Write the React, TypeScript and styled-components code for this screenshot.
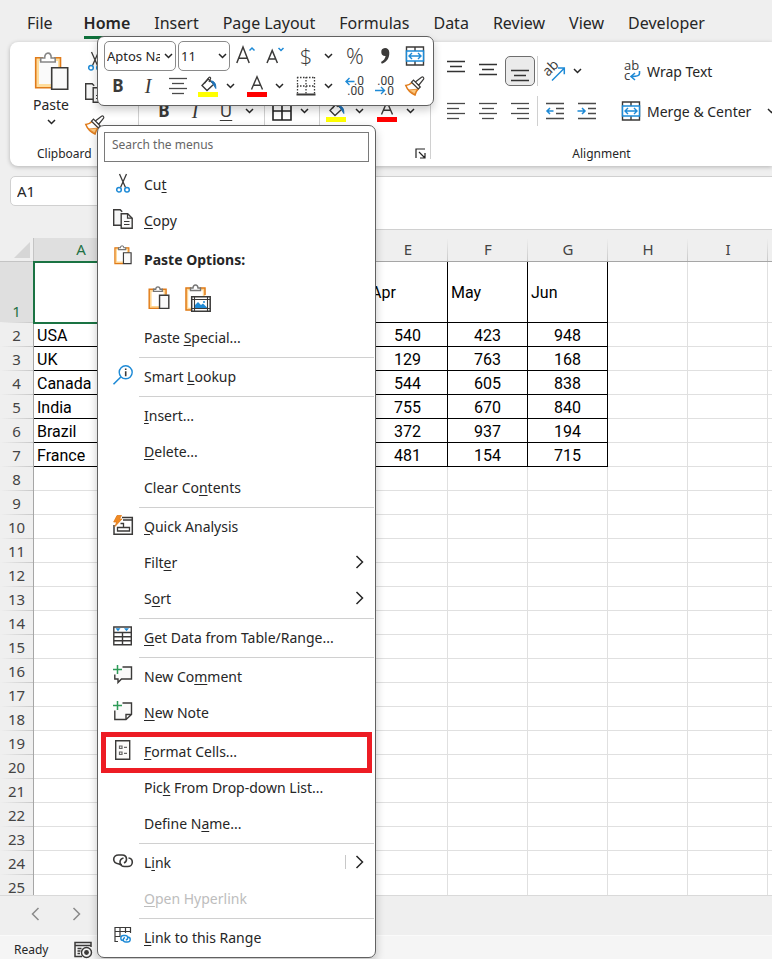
import React from "react";
import styled, { createGlobalStyle, css } from "styled-components";

const UI = `"Noto Sans", "Open Sans", sans-serif`;
const CELL = `Roboto, "Liberation Sans", sans-serif`;
const INK = "#3b3a39";
const BLUE = "#1e8ad6";
const ORANGE = "#e07b1a";

const Global = createGlobalStyle`
  *, *::before, *::after { box-sizing: border-box; }
  body { margin: 0; background: #efefef; font-family: ${UI}; color: #262626; }
  button, input, select, textarea { font: inherit; color: inherit; }
`;

/* ---------- icons ---------- */

const Drawing = styled.svg`
  flex-shrink: 0;
  overflow: visible;
`;
type SvgProps = { w?: number; h?: number; box?: string; children: React.ReactNode };
const Svg = ({ w = 20, h = 20, box, children }: SvgProps) => (
  <Drawing width={w} height={h} viewBox={box ?? `0 0 ${w} ${h}`} fill="none" stroke={INK} strokeWidth="1.4" aria-hidden="true">
    {children}
  </Drawing>
);

const Chevron = () => (
  <Svg w={9} h={6}><path d="M1 1l3.5 3.5L8 1" stroke="#262626" strokeWidth="1.5" /></Svg>
);
const ChevronRight = ({ color = "#262626" }: { color?: string }) => (
  <Svg w={9} h={14}><path d="M1.500 1l6 6-6 6" stroke={color} strokeWidth="1.5" /></Svg>
);
const ChevronLeft = ({ color = "#262626" }: { color?: string }) => (
  <Svg w={9} h={14}><path d="M7.500 1l-6 6 6 6" stroke={color} strokeWidth="1.5" /></Svg>
);
const Scissors = () => (
  <Svg>
    <path d="M6.500 1l6 13.500M13.500 1l-6 13.500" strokeWidth="1.3" />
    <circle cx="6" cy="16.700" r="2.300" stroke={BLUE} strokeWidth="1.5" />
    <circle cx="14" cy="16.700" r="2.300" stroke={BLUE} strokeWidth="1.5" />
  </Svg>
);
const CopyPages = () => (
  <Svg>
    <path d="M8 16.300H0.700V0.700h6.500l2 2" fill="#f6f6f6" />
    <path d="M8.200 4.700h6.500l4.500 4.500v10H8.200z" fill="#fafafa" />
    <path d="M14.500 4.700v4.500h4.700M11 12.500h5.500M11 15.500h5.500" strokeWidth="1.200" />
  </Svg>
);
const Clipboard = ({ w = 20, h = 22 }: { w?: number; h?: number }) => (
  <Svg w={w} h={h} box="0 0 20 22">
    <path d="M2 4h13.500v15.500H2z" fill="#fff" stroke="#ffd591" strokeWidth="2.400" />
    <path d="M6 3H1v17.500h9M12.500 3h4v5" stroke={ORANGE} strokeWidth="1.3" />
    <path d="M5 5V3h2c.2-3 3.800-3 4 0h2v2z" fill="#fff" stroke="#767676" strokeWidth="1.200" />
    <path d="M10.500 8.500h8.500v12h-8.500z" fill="#fafafa" strokeWidth="1.3" />
  </Svg>
);
const PasteLarge = () => (
  <Svg w={35} h={39}>
    <path d="M3.500 7.500h22v26h-22z" fill="#fafafa" stroke="#ffdd9c" strokeWidth="3" />
    <path d="M9 5.700H1.700v30H17M20 5.700h6.500V15" stroke={ORANGE} strokeWidth="1.600" />
    <path d="M6.700 10V6h4c0-6.500 6.500-6.500 6.500 0h4v4z" fill="#fff" stroke="#868686" strokeWidth="1.600" />
    <path d="M17.700 15.700h16v21.500h-16z" fill="#fafafa" strokeWidth="1.600" />
  </Svg>
);
const PastePicture = () => (
  <Svg w={26} h={28}>
    <path d="M2 5h17v20H2z" fill="#fff" stroke="#ffd591" strokeWidth="2.400" />
    <path d="M6 4H1v22h5M15 4h5v7" stroke={ORANGE} strokeWidth="1.5" />
    <path d="M5.500 6.500V4H8c.3-4 4.700-4 5 0h2.500v2.500z" fill="#fff" stroke="#767676" />
    <path d="M6.700 12.700h18.500v14.500H6.700z" fill="#fff" strokeWidth="1.5" />
    <path d="M9.500 12.700v14.500M22.500 12.700v14.500M6.700 15.500h18.500M6.700 24.500h18.500" strokeWidth="1.100" />
    <path d="M10 24v-3l3-3 3 3 2-1.500 4 4V24z" fill={BLUE} stroke="none" />
    <circle cx="19" cy="18" r="1" fill={BLUE} stroke="none" />
  </Svg>
);
const Brush = () => (
  <Svg>
    <path d="M7 6.500C5 8.500 3 9.500.8 9.500 2.500 14 5.500 17 10 19c.5-2.500 2-4.800 3.500-6.300z" fill="#fff" stroke={ORANGE} strokeWidth="1.500" />
    <path d="M3.500 14l8.500-.8L9.700 18z" fill="#fbc87e" stroke={ORANGE} strokeWidth=".8" />
    <path d="M10 6.200L16.500 1.200c1.500-.8 2.800.6 2.100 2L13.500 9.500z" fill="#fff" strokeWidth="1.200" />
    <path d="M6.500 6.200l2-2 6.800 6.800-2 2z" fill="#fff" strokeWidth="1.200" />
  </Svg>
);
const lineRuns: Record<string, number[][]> = {
  left: [[1, 19], [1, 13], [1, 19], [1, 13]],
  center: [[1, 19], [4, 16], [1, 19], [4, 16]],
  right: [[1, 19], [7, 19], [1, 19], [7, 19]],
};
const Lines = ({ kind }: { kind: string }) => (
  <Svg>
    {lineRuns[kind].map(([a, b], i) => (
      <path key={i} d={`M${a} ${2.5 + i * 5}H${b}`} stroke="#4a4a4a" strokeWidth="1.3" />
    ))}
  </Svg>
);
const VLines = ({ top }: { top: number }) => (
  <Svg h={28}>
    <path d={`M1 ${top + 0.5}h18M4 ${top + 5.5}h12M1 ${top + 10.5}h18`} stroke="#333" strokeWidth="1.3" />
  </Svg>
);
const Indent = ({ out }: { out?: boolean }) => (
  <Svg>
    <path d="M1 2.500h18M11 7.500h8M11 12.500h8M1 17.500h18" stroke="#4a4a4a" strokeWidth="1.300" />
    <path d={out ? "M8.500 10H1.500M5 7l-3 3 3 3" : "M.5 10h7M5 7l3 3-3 3"} stroke={BLUE} strokeWidth="1.5" />
  </Svg>
);
const Merge = () => (
  <Svg>
    <path d="M1.500 1h17v18h-17zM10 1v4M10 15v4" strokeWidth="1.400" />
    <path d="M1.500 5h17v10h-17z" fill="#fff" stroke={BLUE} strokeWidth="1.500" />
    <path d="M4 10h12M7 7l-3 3 3 3M13 7l3 3-3 3" stroke={BLUE} strokeWidth="1.400" />
  </Svg>
);
const Fill = () => (
  <Svg h={21}>
    <path d="M10 3l6 5-7 6.500L4 9.500z" fill="#fff" strokeWidth="1.400" />
    <path d="M6.500 7.500L11 1.500c1-.8 2 .2 1.500 1.200L11 6" strokeWidth="1.200" />
    <path d="M13 5c3 0 5 2 4.800 7.500l-2-3.500z" fill="#1f72b8" stroke="#1f72b8" strokeWidth="1" />
    <path d="M0 16h20v5H0z" fill="#ffff00" stroke="none" />
  </Svg>
);
const FontColor = () => (
  <Svg h={21}>
    <path d="M4.500 13.500L10 .8l5.500 12.700M6.500 9.300h7" strokeWidth="1.400" />
    <path d="M0 16h20v5H0z" fill="#ff0000" stroke="none" />
  </Svg>
);
const DottedBorders = () => (
  <Svg>
    <path d="M1 1.500h18M1 10h18M1.500 1v17M10 1v17M18.500 1v17" strokeDasharray="1.500 1.500" strokeWidth="1.300" />
    <path d="M.5 18.500h19" strokeWidth="2" />
  </Svg>
);
const AllBorders = () => (
  <Svg><path d="M1 1h18v18H1zM10 1v18M1 10h18" stroke="#222" strokeWidth="1.600" /></Svg>
);
const GrowFont = ({ down }: { down?: boolean }) => (
  <Svg>
    <path d={down ? "M1 17L6.200 4.500 11.400 17M2.800 13h6.800" : "M.8 17L7 1l6.200 16M3 12.200h8"} strokeWidth="1.500" />
    <path d={down ? "M12.500 2l2.500 2.500L17.500 2" : "M13.500 4.500L16 2l2.500 2.500"} stroke={BLUE} strokeWidth="1.500" />
  </Svg>
);
const Comma = () => (
  <Svg><path d="M10 2a4 4 0 1 0 .6 8c-.4 2.600-2 4.500-4.600 6l.8 1.700C12 16 14.500 12 14.300 6.500 14.200 3.500 12.500 2 10 2z" fill={INK} stroke="none" /></Svg>
);
const Orientation = () => (
  <Svg>
    <g transform="rotate(-45 5 11)" fill={INK} stroke="none"><text x="0" y="13" fontSize="14" fontFamily="Open Sans">ab</text></g>
    <path d="M7 19.500L19 7.500M13 7h6.300v6.300" stroke={BLUE} strokeWidth="1.500" />
  </Svg>
);
const Wrap = () => (
  <Svg>
    <g fill={INK} stroke="none" fontSize="13" fontFamily="Open Sans"><text x="3" y="9">ab</text><text x="3" y="19">c</text></g>
    <path d="M18.500 10v2.500c0 2-2 3-7.500 3M14 12l-4 3.500 4 3.500" stroke={BLUE} strokeWidth="1.600" />
  </Svg>
);
const Decimals = ({ less }: { less?: boolean }) => (
  <Svg>
    <g fill={INK} stroke="none" fontSize="12" fontFamily="Roboto" textAnchor="end">
      <text x="19" y="9">{less ? ".00" : ".0"}</text>
      <text x="19" y="19">{less ? ".0" : ".00"}</text>
    </g>
    <path d={less ? "M0 14.500h9.500M6 11l3.500 3.500L6 18" : "M9.500 5.500H1M4.500 2L1 5.500 4.500 9"} stroke={BLUE} strokeWidth="1.400" />
  </Svg>
);
const Lookup = () => (
  <Svg>
    <path d="M7.800 12L.5 19.300" stroke={BLUE} strokeWidth="1.600" />
    <circle cx="12.700" cy="7.300" r="6.500" stroke={BLUE} strokeWidth="1.400" />
    <path d="M12.700 6.200v5M12.700 3.500v1.600" strokeWidth="1.600" />
  </Svg>
);
const QuickAnalysis = () => (
  <Svg>
    <path d="M9 2.500h10.300v16.800H1V10M10 5h9" strokeWidth="1.500" />
    <path d="M4.500 12.500h12v3.500h-12zM10.500 12.500V8.500h-3" strokeWidth="1.300" />
    <path d="M4 .5h4.500L6.500 4H9L2 11.500 3.700 7H.7z" fill="#f08a24" stroke={ORANGE} strokeWidth=".8" />
  </Svg>
);
const DataTable = () => (
  <Svg>
    <path d="M.8 1h17.500v17.800H.8zM.8 6.500h17.500M.8 10.700h17.500M.8 14.700h17.500M9.500 6v13" strokeWidth="1.400" />
    <path d="M2.500 2.200h5L5 5.200zM11 2.200h5l-2.500 3z" fill={BLUE} stroke="none" />
  </Svg>
);
const GREEN = "#2e9b57";
const NewComment = () => (
  <Svg>
    <path d="M9.500 2h9v12H8.500L5 17.500V14H1.800V9.500" fill="#fafafa" />
    <path d="M4.500 0v9M0 4.500h9" stroke={GREEN} strokeWidth="1.500" />
  </Svg>
);
const NewNote = () => (
  <Svg>
    <path d="M9.500 2h9v11.500L13 18.500H1.800V9.500M18.500 13.500H13v5" fill="#fafafa" />
    <path d="M4.500 0v9M0 4.500h9" stroke={GREEN} strokeWidth="1.500" />
  </Svg>
);
const FormatCells = () => (
  <Svg>
    <path d="M2.700.8h14v18.400h-14z" fill="#fafafa" />
    <path d="M6.500 6h2.500v2.500H6.500zM6.500 12h2.500v2.500H6.500zM11 7.300h3M11 13.300h3" strokeWidth="1.200" stroke="#666" />
  </Svg>
);
const LinkIcon = () => (
  <Svg>
    <path d="M9 13.500a4.600 4.600 0 0 1-3-.5C2 12.500.7 10.500.7 8.300.7 5.500 3 4 5.500 4H9c2.600 0 4.500 1.700 4.500 4.300 0 1.700-1 3-2.500 3.700" strokeWidth="1.600" />
    <path d="M10.500 7c-1.800.5-3.500 2-3.500 4.200 0 2.600 2 4.300 4.500 4.300h3.200c2.500 0 4.600-1.700 4.600-4.300 0-2.300-1.500-4-3.800-4.200" strokeWidth="1.600" />
  </Svg>
);
const LinkRange = () => (
  <Svg>
    <path d="M5 15.500H2V1.500h15.500V7M2 5.500h15.500M2 10.500h5M7 1.500v9.500M12.500 1.500V7" strokeWidth="1.200" />
    <path d="M10 14.500c-3-.2-3-5 .5-5h1.800c3 0 3.200 4 .5 4.500M12 11.500c-2.500.7-2.300 4.500.7 4.500h1.800c3.500 0 3.500-4.500.7-5" stroke={BLUE} strokeWidth="1.400" />
  </Svg>
);
const MacroIcon = () => (
  <Svg w={19} h={18}>
    <path d="M8 15.500H1V1.500h16V6M1 4.500h16M3.500 7.500h4M3.500 10h3M3.500 12.500h2.500" strokeWidth="1.500" />
    <circle cx="12.500" cy="11.500" r="5" fill="#f5f5f5" />
    <circle cx="12.500" cy="11.500" r="2.400" fill={INK} stroke="none" />
  </Svg>
);
const Launcher = () => (
  <Svg w={11} h={11}><path d="M1 10V1h9M4 4l5.500 5.500M10 5v5H5" stroke="#222" strokeWidth="1.200" /></Svg>
);

/* ---------- shell ---------- */

const Window = styled.div`
  position: relative;
  display: flex;
  flex-direction: column;
  height: 100vh;
  overflow: hidden;
`;
const TabStrip = styled.nav`
  display: flex;
  flex-shrink: 0;
  gap: 24px;
  height: 42px;
  padding: 9px 27px 0;
  white-space: nowrap;
`;
const Tab = styled.button<{ $active?: boolean }>`
  height: 30px;
  padding: 0;
  border: 0;
  border-bottom: 3px solid ${(p) => (p.$active ? "#0f703b" : "transparent")};
  background: none;
  font-size: 16px;
  font-weight: ${(p) => (p.$active ? 600 : 400)};
`;
const FileTab = styled(Tab)`
  margin-right: 7px;
`;

/* ---------- ribbon ---------- */

const Ribbon = styled.section`
  display: flex;
  flex-shrink: 0;
  height: 124px;
  margin-left: 10px;
  padding: 4px 0 7px;
  background: #fff;
  border-radius: 8px 0 0 8px;
  box-shadow: 0 1px 4px rgba(0, 0, 0, 0.25);
`;
const Group = styled.div<{ $width?: number }>`
  display: flex;
  flex-direction: column;
  justify-content: space-between;
  flex: ${(p) => (p.$width ? `0 0 ${p.$width}px` : "1 1 0")};
  min-width: 0;
  padding: ${(p) => (p.$width ? "0 4px 0 9px" : "0 10px")};
  & + & { border-left: 1px solid #d0d0d0; }
`;
const GroupLabel = styled.div`
  display: flex;
  justify-content: center;
  align-items: center;
  height: 12px;
  font-size: 12px;
`;
const FontLabel = styled(GroupLabel)`
  justify-content: flex-end;
`;
const ClipboardLabel = styled(GroupLabel)`
  justify-content: space-between;
  padding-left: 18px;
`;
const Row = styled.div<{ $gap?: number }>`
  display: flex;
  align-items: center;
  gap: ${(p) => p.$gap ?? 0}px;
`;
const ClipboardBody = styled.div`
  display: flex;
  gap: 5px;
  padding-left: 4px;
`;
const PasteButton = styled.button`
  display: flex;
  flex-direction: column;
  align-items: center;
  gap: 4px;
  width: 56px;
  padding: 6px 0 0;
  border: 0;
  background: none;
  font-size: 14px;
  line-height: 20px;
`;
const SmallStack = styled.div`
  display: flex;
  flex-direction: column;
  gap: 2px;
`;
const IconButton = styled.button<{ $w?: number; $on?: boolean }>`
  display: flex;
  flex-shrink: 0;
  align-items: center;
  justify-content: center;
  width: ${(p) => p.$w ?? 30}px;
  height: 30px;
  padding: 0;
  border: 1px solid ${(p) => (p.$on ? "#6e6e6e" : "transparent")};
  border-radius: 5px;
  background: ${(p) => (p.$on ? "#ebebeb" : "none")};
`;
const StackButton = styled(IconButton)`
  width: 22px;
`;
const DropButton = styled(IconButton)`
  width: 19px;
  padding-right: 4px;
`;
const Glyph = styled.span<{ $kind?: "bold" | "italic" | "underline" }>`
  font-size: 17px;
  line-height: 20px;
  color: ${INK};
  ${(p) => p.$kind === "bold" && css`font-weight: 700;`}
  ${(p) => p.$kind === "italic" && css`font-family: "Liberation Serif", serif; font-style: italic; font-size: 20px;`}
  ${(p) => p.$kind === "underline" && css`text-decoration: underline; text-underline-offset: 3px;`}
`;
const Symbol = styled.span`
  padding-bottom: 2px;
  font-family: "Open Sans", sans-serif;
  font-size: 22px;
  font-weight: 300;
  line-height: 24px;
  color: ${INK};
`;
const VRule = styled.span`
  align-self: stretch;
  width: 1px;
  background: #d0d0d0;
`;
const FontBody = styled.div`
  display: flex;
  flex-direction: column;
  justify-content: flex-end;
  height: 80px;
`;
const FontRow = styled.div`
  display: grid;
  grid-template-columns: 32px 30px 32px 18px 8px 27px 22px 4px 30px 20px 32px 18px;
  align-items: center;
  justify-items: center;
`;
const AlignBody = styled.div`
  display: flex;
  gap: 7px;
  padding-top: 8px;
`;
const AlignRows = styled.div`
  display: flex;
  flex-direction: column;
  gap: 10px;
  padding: 2px 0;
`;
const TallRule = styled.span`
  width: 1px;
  height: 79px;
  background: #c8c8c8;
`;
const LabelButton = styled.button`
  display: flex;
  align-items: center;
  gap: 6px;
  height: 30px;
  padding: 0 0 0 5px;
  border: 0;
  background: none;
  font-size: 14px;
  white-space: nowrap;
`;
const MergeDrop = styled.span`
  display: flex;
  padding-left: 10px;
`;

/* ---------- formula bar ---------- */

const FormulaRow = styled.div`
  display: flex;
  flex-shrink: 0;
  align-items: flex-start;
  gap: 90px;
  height: 64px;
  padding: 10px 0 0 10px;
`;
const NameBox = styled.input`
  width: 110px;
  height: 30px;
  padding: 0 6px;
  border: 1px solid #d0d0d0;
  border-radius: 5px;
  background: #fff;
  font-size: 15px;
`;
const FormulaInput = styled.textarea`
  flex: 1;
  height: 54px;
  border: 1px solid #d0d0d0;
  border-right: 0;
  border-radius: 5px 0 0 5px;
  background: #fff;
  resize: none;
`;

/* ---------- sheet ---------- */

const SheetArea = styled.main`
  flex: 1;
  min-height: 0;
  padding-top: 8px;
  overflow: hidden;
`;
const Sheet = styled.table`
  width: 1648px;
  table-layout: fixed;
  border-collapse: separate;
  border-spacing: 0;
  background: #fff;
  font-family: ${CELL};
  font-size: 16px;
  color: #000;
`;
const Col = styled.col<{ $w: number }>`
  width: ${(p) => p.$w}px;
`;
const ColHead = styled.th<{ $on?: boolean }>`
  height: 24px;
  padding: 0 0 2px;
  border-bottom: 1px solid #a6a6a6;
  background: linear-gradient(#efefef, #c8c8c8) right / 1px 100% no-repeat, ${(p) => (p.$on ? "#dfdfdf" : "#efefef")};
  font: 400 15px/20px ${UI};
  color: ${(p) => (p.$on ? "#1f7145" : "#444")};
`;
const Corner = styled.td`
  height: 24px;
  padding: 0 3px 3px 0;
  border-right: 1px solid #c4c4c4;
  border-bottom: 1px solid #c4c4c4;
  background: #efefef;
  vertical-align: bottom;
  text-align: right;
  line-height: 0;
`;
const RowHead = styled.th<{ $on?: boolean }>`
  height: ${(p) => (p.$on ? 61 : 24)}px;
  padding: 0 0 2px;
  border-right: 1px solid #a6a6a6;
  background: linear-gradient(90deg, #efefef, #c8c8c8) bottom / 100% 1px no-repeat, ${(p) => (p.$on ? "#dfdfdf" : "#efefef")};
  font: 400 15px/20px ${UI};
  color: ${(p) => (p.$on ? "#1f7145" : "#444")};
  vertical-align: bottom;
`;
const Cell = styled.td<{ $data?: boolean; $center?: boolean; $selected?: boolean }>`
  padding: 2px 3px 0;
  border-right: 1px solid ${(p) => (p.$data ? "#000" : "#e0e0e0")};
  border-bottom: 1px solid ${(p) => (p.$data ? "#000" : "#e0e0e0")};
  line-height: 20px;
  text-align: ${(p) => (p.$center ? "center" : "left")};
  ${(p) => p.$selected && css`
    position: relative;
    outline: 2px solid #1a7343;
    outline-offset: -1px;
  `}
`;
const SheetBar = styled.div`
  display: flex;
  flex-shrink: 0;
  align-items: center;
  gap: 20px;
  height: 40px;
  padding: 0 25px 4px;
  border-top: 1px solid #d9d9d9;
`;
const NavButton = styled.button`
  display: flex;
  justify-content: center;
  width: 21px;
  padding: 0;
  border: 0;
  background: none;
`;
const StatusBar = styled.footer`
  display: flex;
  flex-shrink: 0;
  align-items: center;
  gap: 26px;
  height: 24px;
  padding: 4px 14px 0;
  border-top: 1px solid #fafafa;
  background: #f5f5f5;
  font-size: 12px;
`;

/* ---------- floating toolbar and menu ---------- */

const floating = css`
  position: absolute;
  left: 97px;
  border: 1px solid #616161;
  background: #fff;
`;
const MiniBar = styled.div`
  ${floating}
  top: 36px;
  padding: 4px 3px 4px 5px;
  border-radius: 7px;
  box-shadow: 0 4px 8px rgba(0, 0, 0, 0.2);
`;
const SelectBox = styled.label<{ $w: number }>`
  display: grid;
  align-items: center;
  width: ${(p) => p.$w}px;
  height: 30px;
  margin: 0 1px;
  border: 1px solid #8a8a8a;
  border-radius: 5px;
  overflow: hidden;
  & > * { grid-area: 1 / 1; }
  & > svg { justify-self: end; margin-right: 2px; pointer-events: none; }
`;
const Select = styled.select`
  appearance: none;
  min-width: 0;
  margin-right: 15px;
  padding: 0 0 0 2px;
  border: 0;
  background: none;
  font-size: 13px;
  outline: none;
  text-overflow: clip;
`;
const Menu = styled.div`
  ${floating}
  top: 125px;
  width: 279px;
  padding: 6px 0 1px;
  border-radius: 7px;
  box-shadow: 0 4px 10px rgba(0, 0, 0, 0.22);
`;
const Search = styled.input`
  display: block;
  width: 265px;
  height: 30px;
  margin: 0 6px 5px;
  padding: 0 7px 6px;
  border: 1px solid #7a7a7a;
  background: #fff;
  font-size: 12px;
  &::placeholder { color: #666; opacity: 1; }
`;
const Item = styled.button<{ $dim?: boolean; $strong?: boolean; $marked?: boolean }>`
  position: relative;
  display: grid;
  grid-template-columns: 20px 1fr auto;
  column-gap: 11px;
  align-items: center;
  width: 100%;
  height: 36px;
  padding: 0 11px 2px 15px;
  border: 0;
  background: none;
  font-size: 14px;
  font-weight: ${(p) => (p.$strong ? 700 : 400)};
  text-align: left;
  color: ${(p) => (p.$dim ? "#bdbdbd" : "#262626")};
  u { text-underline-offset: 2px; }
  ${(p) => p.$marked && css`
    &::after {
      content: "";
      position: absolute;
      inset: -2px 3px -3px 3px;
      border: 5px solid #ed1c24;
    }
  `}
`;
const ItemIcon = styled.span<{ $raised?: boolean }>`
  display: flex;
  justify-content: center;
  padding-bottom: ${(p) => (p.$raised ? 8 : 2)}px;
`;
const Arrow = styled.span<{ $split?: boolean }>`
  display: flex;
  padding-left: 9px;
  border-left: 1px solid ${(p) => (p.$split ? "#c8c8c8" : "transparent")};
`;
const Divider = styled.hr<{ $blank?: boolean }>`
  height: 1px;
  margin: 1px 1px 1px 41px;
  border: 0;
  background: ${(p) => (p.$blank ? "transparent" : "#d0d0d0")};
`;
const PasteChoices = styled.div`
  display: flex;
  align-items: center;
  gap: 15px;
  height: 42px;
  padding: 0 0 2px 50px;
`;
const ChoiceButton = styled.button`
  display: flex;
  padding: 0;
  border: 0;
  background: none;
`;

/* ---------- data ---------- */

const columns = "ABCDEFGHIJKLMNOPQRST".split("");
const data: Record<number, Record<string, string>> = {
  1: { B: "Jan", C: "Feb", D: "Mar", E: "Apr", F: "May", G: "Jun" },
  2: { A: "USA", E: "540", F: "423", G: "948" },
  3: { A: "UK", E: "129", F: "763", G: "168" },
  4: { A: "Canada", E: "544", F: "605", G: "838" },
  5: { A: "India", E: "755", F: "670", G: "840" },
  6: { A: "Brazil", E: "372", F: "937", G: "194" },
  7: { A: "France", E: "481", F: "154", G: "715" },
};

type Entry =
  | { sep: true; blank?: boolean }
  | { choices: true }
  | { label: string; icon?: React.ReactNode; arrow?: boolean; split?: boolean; dim?: boolean; strong?: boolean; marked?: boolean };

/* An underscore stands before the access key of a label. */
const entries: Entry[] = [
  { label: "Cu_t", icon: <Scissors /> },
  { label: "_Copy", icon: <CopyPages /> },
  { sep: true, blank: true },
  { label: "Paste Options:", icon: <Clipboard w={18} h={20} />, strong: true },
  { choices: true },
  { label: "Paste _Special..." },
  { sep: true },
  { label: "Smart _Lookup", icon: <Lookup /> },
  { sep: true },
  { label: "_Insert..." },
  { label: "_Delete..." },
  { label: "Clear Co_ntents" },
  { sep: true },
  { label: "_Quick Analysis", icon: <QuickAnalysis /> },
  { label: "Filt_er", arrow: true },
  { label: "S_ort", arrow: true },
  { sep: true },
  { label: "_Get Data from Table/Range...", icon: <DataTable /> },
  { sep: true },
  { label: "New Co_mment", icon: <NewComment /> },
  { label: "_New Note", icon: <NewNote /> },
  { sep: true, blank: true },
  { label: "_Format Cells...", icon: <FormatCells />, marked: true },
  { label: "Pic_k From Drop-down List..." },
  { label: "Define N_ame..." },
  { sep: true },
  { label: "L_ink", icon: <LinkIcon />, arrow: true, split: true },
  { label: "_Open Hyperlink", dim: true },
  { sep: true },
  { label: "_Link to this Range", icon: <LinkRange /> },
];

const KeyLabel = ({ text }: { text: string }) => {
  const i = text.indexOf("_");
  if (i < 0) return <span>{text}</span>;
  return <span>{text.slice(0, i)}<u>{text[i + 1]}</u>{text.slice(i + 2)}</span>;
};

const ContextMenu = () => (
  <Menu role="menu">
    <Search aria-label="Search the menus" placeholder="Search the menus" />
    {entries.map((e, i) => {
      if ("sep" in e) return <Divider key={i} $blank={e.blank} />;
      if ("choices" in e)
        return (
          <PasteChoices key={i}>
            <ChoiceButton aria-label="Paste"><Clipboard w={22} h={24} /></ChoiceButton>
            <ChoiceButton aria-label="Paste picture"><PastePicture /></ChoiceButton>
          </PasteChoices>
        );
      return (
        <Item key={i} role="menuitem" disabled={e.dim} $dim={e.dim} $strong={e.strong} $marked={e.marked}>
          <ItemIcon $raised={e.strong}>{e.icon}</ItemIcon>
          <KeyLabel text={e.label} />
          {e.arrow && <Arrow $split={e.split}><ChevronRight /></Arrow>}
        </Item>
      );
    })}
  </Menu>
);

const Drop = ({ label }: { label: string }) => (
  <DropButton aria-label={label}><Chevron /></DropButton>
);

const MiniToolbar = () => (
  <MiniBar role="toolbar">
    <Row>
      <SelectBox $w={72}>
        <Select aria-label="Font"><option>Aptos Narrow</option></Select>
        <Chevron />
      </SelectBox>
      <SelectBox $w={52}>
        <Select aria-label="Font size"><option>11</option></Select>
        <Chevron />
      </SelectBox>
      <IconButton aria-label="Increase font size"><GrowFont /></IconButton>
      <IconButton aria-label="Decrease font size"><GrowFont down /></IconButton>
      <IconButton aria-label="Accounting format"><Symbol>$</Symbol></IconButton>
      <Drop label="Accounting options" />
      <IconButton aria-label="Percent"><Symbol>%</Symbol></IconButton>
      <IconButton aria-label="Comma style"><Comma /></IconButton>
      <IconButton aria-label="Merge and center"><Merge /></IconButton>
    </Row>
    <Row>
      <IconButton aria-label="Bold"><Glyph $kind="bold">B</Glyph></IconButton>
      <IconButton aria-label="Italic"><Glyph $kind="italic">I</Glyph></IconButton>
      <IconButton aria-label="Center"><Lines kind="center" /></IconButton>
      <IconButton aria-label="Fill color"><Fill /></IconButton>
      <Drop label="Fill options" />
      <IconButton aria-label="Font color"><FontColor /></IconButton>
      <Drop label="Font color options" />
      <IconButton aria-label="Borders"><DottedBorders /></IconButton>
      <Drop label="Border options" />
      <IconButton aria-label="Increase decimal"><Decimals /></IconButton>
      <IconButton aria-label="Decrease decimal"><Decimals less /></IconButton>
      <IconButton aria-label="Format painter"><Brush /></IconButton>
    </Row>
  </MiniBar>
);

const RibbonBar = () => (
  <Ribbon>
    <Group $width={128}>
      <ClipboardBody>
        <PasteButton><PasteLarge />Paste<Chevron /></PasteButton>
        <SmallStack>
          <StackButton aria-label="Cut"><Scissors /></StackButton>
          <StackButton aria-label="Copy"><CopyPages /></StackButton>
          <StackButton aria-label="Format painter"><Brush /></StackButton>
        </SmallStack>
      </ClipboardBody>
      <ClipboardLabel>Clipboard<Launcher /></ClipboardLabel>
    </Group>
    <Group $width={292}>
      <FontBody>
        <FontRow>
          <IconButton aria-label="Bold"><Glyph $kind="bold">B</Glyph></IconButton>
          <IconButton aria-label="Italic"><Glyph $kind="italic">I</Glyph></IconButton>
          <IconButton aria-label="Underline"><Glyph $kind="underline">U</Glyph></IconButton>
          <Drop label="Underline options" />
          <VRule />
          <IconButton aria-label="Borders"><AllBorders /></IconButton>
          <Drop label="Border options" />
          <VRule />
          <IconButton aria-label="Fill color"><Fill /></IconButton>
          <Drop label="Fill options" />
          <IconButton aria-label="Font color"><FontColor /></IconButton>
          <Drop label="Font color options" />
        </FontRow>
      </FontBody>
      <FontLabel><Launcher /></FontLabel>
    </Group>
    <Group>
      <AlignBody>
        <AlignRows>
          <Row $gap={2}>
            <IconButton aria-label="Top align"><VLines top={4} /></IconButton>
            <IconButton aria-label="Middle align"><VLines top={7} /></IconButton>
            <IconButton aria-label="Bottom align" $on><VLines top={13} /></IconButton>
            <VRule />
            <IconButton aria-label="Orientation"><Orientation /></IconButton>
            <IconButton aria-label="Orientation options" $w={10}><Chevron /></IconButton>
          </Row>
          <Row $gap={2}>
            <IconButton aria-label="Align left"><Lines kind="left" /></IconButton>
            <IconButton aria-label="Align center"><Lines kind="center" /></IconButton>
            <IconButton aria-label="Align right"><Lines kind="right" /></IconButton>
            <VRule />
            <IconButton aria-label="Decrease indent"><Indent out /></IconButton>
            <IconButton aria-label="Increase indent"><Indent /></IconButton>
          </Row>
        </AlignRows>
        <TallRule />
        <AlignRows>
          <LabelButton><Wrap />Wrap Text</LabelButton>
          <LabelButton><Merge />Merge &amp; Center<MergeDrop><Chevron /></MergeDrop></LabelButton>
        </AlignRows>
      </AlignBody>
      <GroupLabel>Alignment</GroupLabel>
    </Group>
  </Ribbon>
);

const SheetGrid = () => (
  <SheetArea>
    <Sheet>
      <colgroup>
        <Col $w={34} />
        {columns.map((c) => <Col key={c} $w={c === "A" ? 94 : 80} />)}
      </colgroup>
      <thead>
        <tr>
          <Corner><Svg w={16} h={16}><path d="M16 0v16H0z" fill="#d6d6d6" stroke="none" /></Svg></Corner>
          {columns.map((c) => <ColHead key={c} scope="col" $on={c === "A"}>{c}</ColHead>)}
        </tr>
      </thead>
      <tbody>
        {Array.from({ length: 25 }, (_, i) => i + 1).map((r) => (
          <tr key={r}>
            <RowHead scope="row" $on={r === 1}>{r}</RowHead>
            {columns.map((c) => (
              <Cell
                key={c}
                $data={r <= 7 && c <= "G"}
                $center={r > 1 && c > "A"}
                $selected={r === 1 && c === "A"}
              >
                {data[r]?.[c]}
              </Cell>
            ))}
          </tr>
        ))}
      </tbody>
    </Sheet>
  </SheetArea>
);

const tabs = ["Home", "Insert", "Page Layout", "Formulas", "Data", "Review", "View", "Developer"];

export default function App() {
  return (
    <>
      <Global />
      <Window>
        <TabStrip>
          <FileTab>File</FileTab>
          {tabs.map((t) => <Tab key={t} $active={t === "Home"}>{t}</Tab>)}
        </TabStrip>
        <RibbonBar />
        <FormulaRow>
          <NameBox aria-label="Name box" defaultValue="A1" />
          <FormulaInput aria-label="Formula" />
        </FormulaRow>
        <SheetGrid />
        <SheetBar>
          <NavButton aria-label="Previous sheet"><ChevronLeft color="#8a8a8a" /></NavButton>
          <NavButton aria-label="Next sheet"><ChevronRight color="#8a8a8a" /></NavButton>
        </SheetBar>
        <StatusBar>Ready<MacroIcon /></StatusBar>
        <MiniToolbar />
        <ContextMenu />
      </Window>
    </>
  );
}
